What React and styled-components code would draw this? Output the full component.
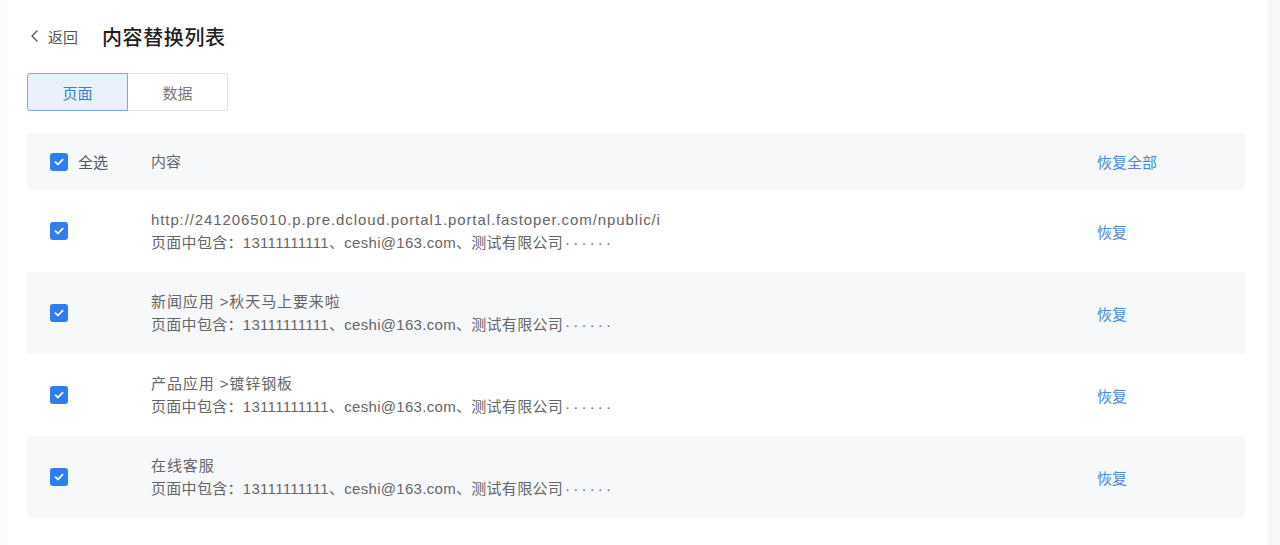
import React from 'react';
import styled, { createGlobalStyle } from 'styled-components';

const GlobalStyle = createGlobalStyle`
  * { box-sizing: border-box; }
  body {
    margin: 0;
    background: #fff;
    font-family: "Liberation Sans", "Noto Sans CJK SC", sans-serif;
  }
`;

const Shell = styled.div`
  display: flex;
  height: 545px;
  overflow: hidden;
`;

const LeftEdge = styled.div`
  width: 8px;
  background: #fbfbfc;
`;

const Main = styled.div`
  flex: 1;
  padding: 22px 23px 0 19px;
`;

const RightEdge = styled.div`
  width: 12px;
  background: #f6f7f9;
`;

const Header = styled.div`
  display: flex;
  align-items: center;
  height: 28px;
`;

const Back = styled.a`
  display: flex;
  align-items: center;
  gap: 7px;
  font-size: 15px;
  color: #555;
  margin-left: 2px;
  margin-right: 24px;
  cursor: pointer;
`;

const Title = styled.h1`
  margin: 0;
  font-size: 20px;
  font-weight: 500;
  letter-spacing: 0.6px;
  color: #1f1f1f;
`;

const Tabs = styled.div`
  display: flex;
  margin-top: 23px;
`;

const Tab = styled.button`
  width: ${p => (p.$first ? '101px' : '100px')};
  height: 38px;
  font-family: inherit;
  font-size: 15px;
  border-radius: ${p => (p.$first ? '3px 0 0 3px' : '0 3px 3px 0')};
  border: 1px solid ${p => (p.$active ? '#7aa7e6' : '#e2e5ea')};
  border-left-width: ${p => (p.$first ? '1px' : '0')};
  background: ${p => (p.$active ? '#e9f1fc' : '#fff')};
  color: ${p => (p.$active ? '#3b7ad6' : '#777')};
  cursor: pointer;
`;

const Table = styled.div`
  margin-top: 22px;
`;

const Row = styled.div`
  display: flex;
  align-items: center;
  height: ${p => (p.$head ? '57px' : '82px')};
  background: ${p => (p.$shade ? '#f7f8fa' : '#fff')};
  color: #666;
  font-size: 15px;
`;

const CheckCell = styled.div`
  display: flex;
  align-items: center;
  gap: 10px;
  width: 124px;
  padding-left: 23px;
  color: #555;
`;

const ContentCell = styled.div`
  flex: 1;
  display: flex;
  flex-direction: column;
  gap: 4px;
  line-height: 19px;
`;

const Line = styled.span`
  letter-spacing: ${p => (p.$wide ? '0.9px' : '0.3px')};
`;

const Dots = styled.span`
  letter-spacing: 3.2px;
  margin-left: 2px;
`;

const ActionCell = styled.div`
  width: 148px;
  color: #4a88d9;
`;

const Box = styled.span`
  display: inline-flex;
  align-items: center;
  justify-content: center;
  width: 18px;
  height: 18px;
  border-radius: 3px;
  background: #2f7ef0;
`;

const Check = () => (
  <Box>
    <svg width="12" height="12" viewBox="0 0 12 12">
      <path d="M2.5 6.2 L5 8.5 L9.6 3.6" fill="none" stroke="#fff" strokeWidth="1.8" strokeLinecap="round" strokeLinejoin="round" />
    </svg>
  </Box>
);

const summary = '页面中包含：13111111111、ceshi@163.com、测试有限公司';

const rows = [
  'http://2412065010.p.pre.dcloud.portal1.portal.fastoper.com/npublic/i',
  '新闻应用 >秋天马上要来啦',
  '产品应用 >镀锌钢板',
  '在线客服',
];

export default function App() {
  return (
    <>
      <GlobalStyle />
      <Shell>
        <LeftEdge />
        <Main>
          <Header>
            <Back>
              <svg width="12" height="14" viewBox="0 0 12 14">
                <path d="M8 2 L3 7 L8 12" fill="none" stroke="#555" strokeWidth="1.4" strokeLinecap="round" strokeLinejoin="round" />
              </svg>
              返回
            </Back>
            <Title>内容替换列表</Title>
          </Header>
          <Tabs>
            <Tab $first $active>页面</Tab>
            <Tab>数据</Tab>
          </Tabs>
          <Table>
            <Row $head $shade>
              <CheckCell><Check />全选</CheckCell>
              <ContentCell>内容</ContentCell>
              <ActionCell>恢复全部</ActionCell>
            </Row>
            {rows.map((title, i) => (
              <Row key={i} $shade={i % 2 === 1}>
                <CheckCell><Check /></CheckCell>
                <ContentCell>
                  <Line $wide>{title}</Line>
                  <Line>{summary}<Dots>······</Dots></Line>
                </ContentCell>
                <ActionCell>恢复</ActionCell>
              </Row>
            ))}
          </Table>
        </Main>
        <RightEdge />
      </Shell>
    </>
  );
}
